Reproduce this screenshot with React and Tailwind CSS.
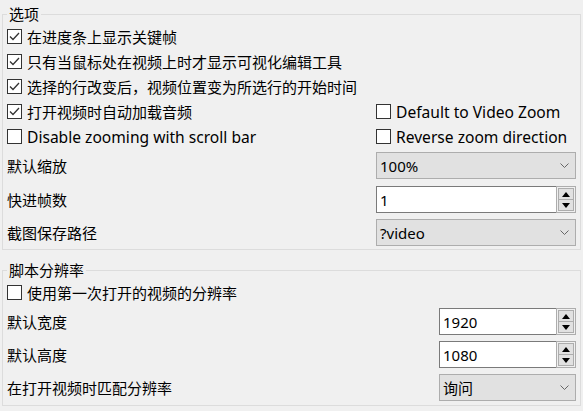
import React from "react";

function Check({ label, checked, latin }) {
  return (
    <label className="flex h-[25px] items-center gap-[5px]">
      <span className="flex h-[15px] w-[15px] shrink-0 items-center justify-center border border-[#333333] bg-white">
        {checked && (
          <svg width="13" height="13" viewBox="0 0 13 13">
            <polyline points="2,6.5 5,9.5 11,3" fill="none" stroke="#333333" strokeWidth="1.3" />
          </svg>
        )}
      </span>
      <span className={"whitespace-nowrap " + (latin ? "text-[15.6px]" : "")}>{label}</span>
    </label>
  );
}

function Combo({ value }) {
  return (
    <div className="flex h-[27px] items-center justify-between border border-[#adadad] bg-[#e1e1e1] pl-[3px] pr-[6px]">
      <span>{value}</span>
      <svg width="9" height="6" viewBox="0 0 9 6">
        <polyline points="0.5,0.5 4.5,4.5 8.5,0.5" fill="none" stroke="#666666" strokeWidth="1" />
      </svg>
    </div>
  );
}

function Spin({ value }) {
  return (
    <div className="flex h-[27px]">
      <div className="flex flex-1 items-center border-y border-l border-[#7a7a7a] bg-white pl-[3px]">
        {value}
      </div>
      <div className="flex w-[20px] flex-col border border-[#adadad] bg-[#f0f0f0] p-[1px]">
        <div className="flex flex-1 items-center justify-center border border-[#adadad] bg-[#e1e1e1]">
          <svg width="8" height="5" viewBox="0 0 8 5">
            <polygon points="0,5 4,0 8,5" fill="#000" />
          </svg>
        </div>
        <div className="flex flex-1 items-center justify-center border border-t-0 border-[#adadad] bg-[#e1e1e1]">
          <svg width="8" height="5" viewBox="0 0 8 5">
            <polygon points="0,0 8,0 4,5" fill="#000" />
          </svg>
        </div>
      </div>
    </div>
  );
}

function Row({ label, width, children, className = "" }) {
  return (
    <div className={"flex items-center justify-between " + className}>
      <span className="whitespace-nowrap">{label}</span>
      <div className={width}>{children}</div>
    </div>
  );
}

export default function App() {
  return (
    <div className="h-[411px] w-[583px] overflow-hidden bg-[#f0f0f0] pt-[4px] text-[15px] leading-5 text-black font-['Noto_Sans','Noto_Sans_CJK_SC',sans-serif]">
      <fieldset className="mx-[2px] border border-[#dcdcdc] px-[4px] pb-[3px]">
        <legend className="px-[2px] leading-5">选项</legend>
        <Check checked label="在进度条上显示关键帧" />
        <Check checked label="只有当鼠标处在视频上时才显示可视化编辑工具" />
        <Check checked label="选择的行改变后，视频位置变为所选行的开始时间" />
        <div className="flex justify-between">
          <Check checked label="打开视频时自动加载音频" />
          <div className="w-[200px]">
            <Check latin label="Default to Video Zoom" />
          </div>
        </div>
        <div className="flex justify-between">
          <Check latin label="Disable zooming with scroll bar" />
          <div className="w-[200px]">
            <Check latin label="Reverse zoom direction" />
          </div>
        </div>
        <Row label="默认缩放" width="w-[200px]" className="mt-[3px]">
          <Combo value="100%" />
        </Row>
        <Row label="快进帧数" width="w-[200px]" className="mt-[7px]">
          <Spin value="1" />
        </Row>
        <Row label="截图保存路径" width="w-[200px]" className="mt-[6px]">
          <Combo value="?video" />
        </Row>
      </fieldset>

      <fieldset className="mx-[2px] mt-[10px] border border-[#dcdcdc] px-[4px] pb-[4px]">
        <legend className="px-[2px] leading-5">脚本分辨率</legend>
        <Check label="使用第一次打开的视频的分辨率" />
        <Row label="默认宽度" width="w-[137px]" className="mt-[3px]">
          <Spin value="1920" />
        </Row>
        <Row label="默认高度" width="w-[137px]" className="mt-[6px]">
          <Spin value="1080" />
        </Row>
        <Row label="在打开视频时匹配分辨率" width="w-[137px]" className="mt-[6px]">
          <Combo value="询问" />
        </Row>
      </fieldset>
    </div>
  );
}
